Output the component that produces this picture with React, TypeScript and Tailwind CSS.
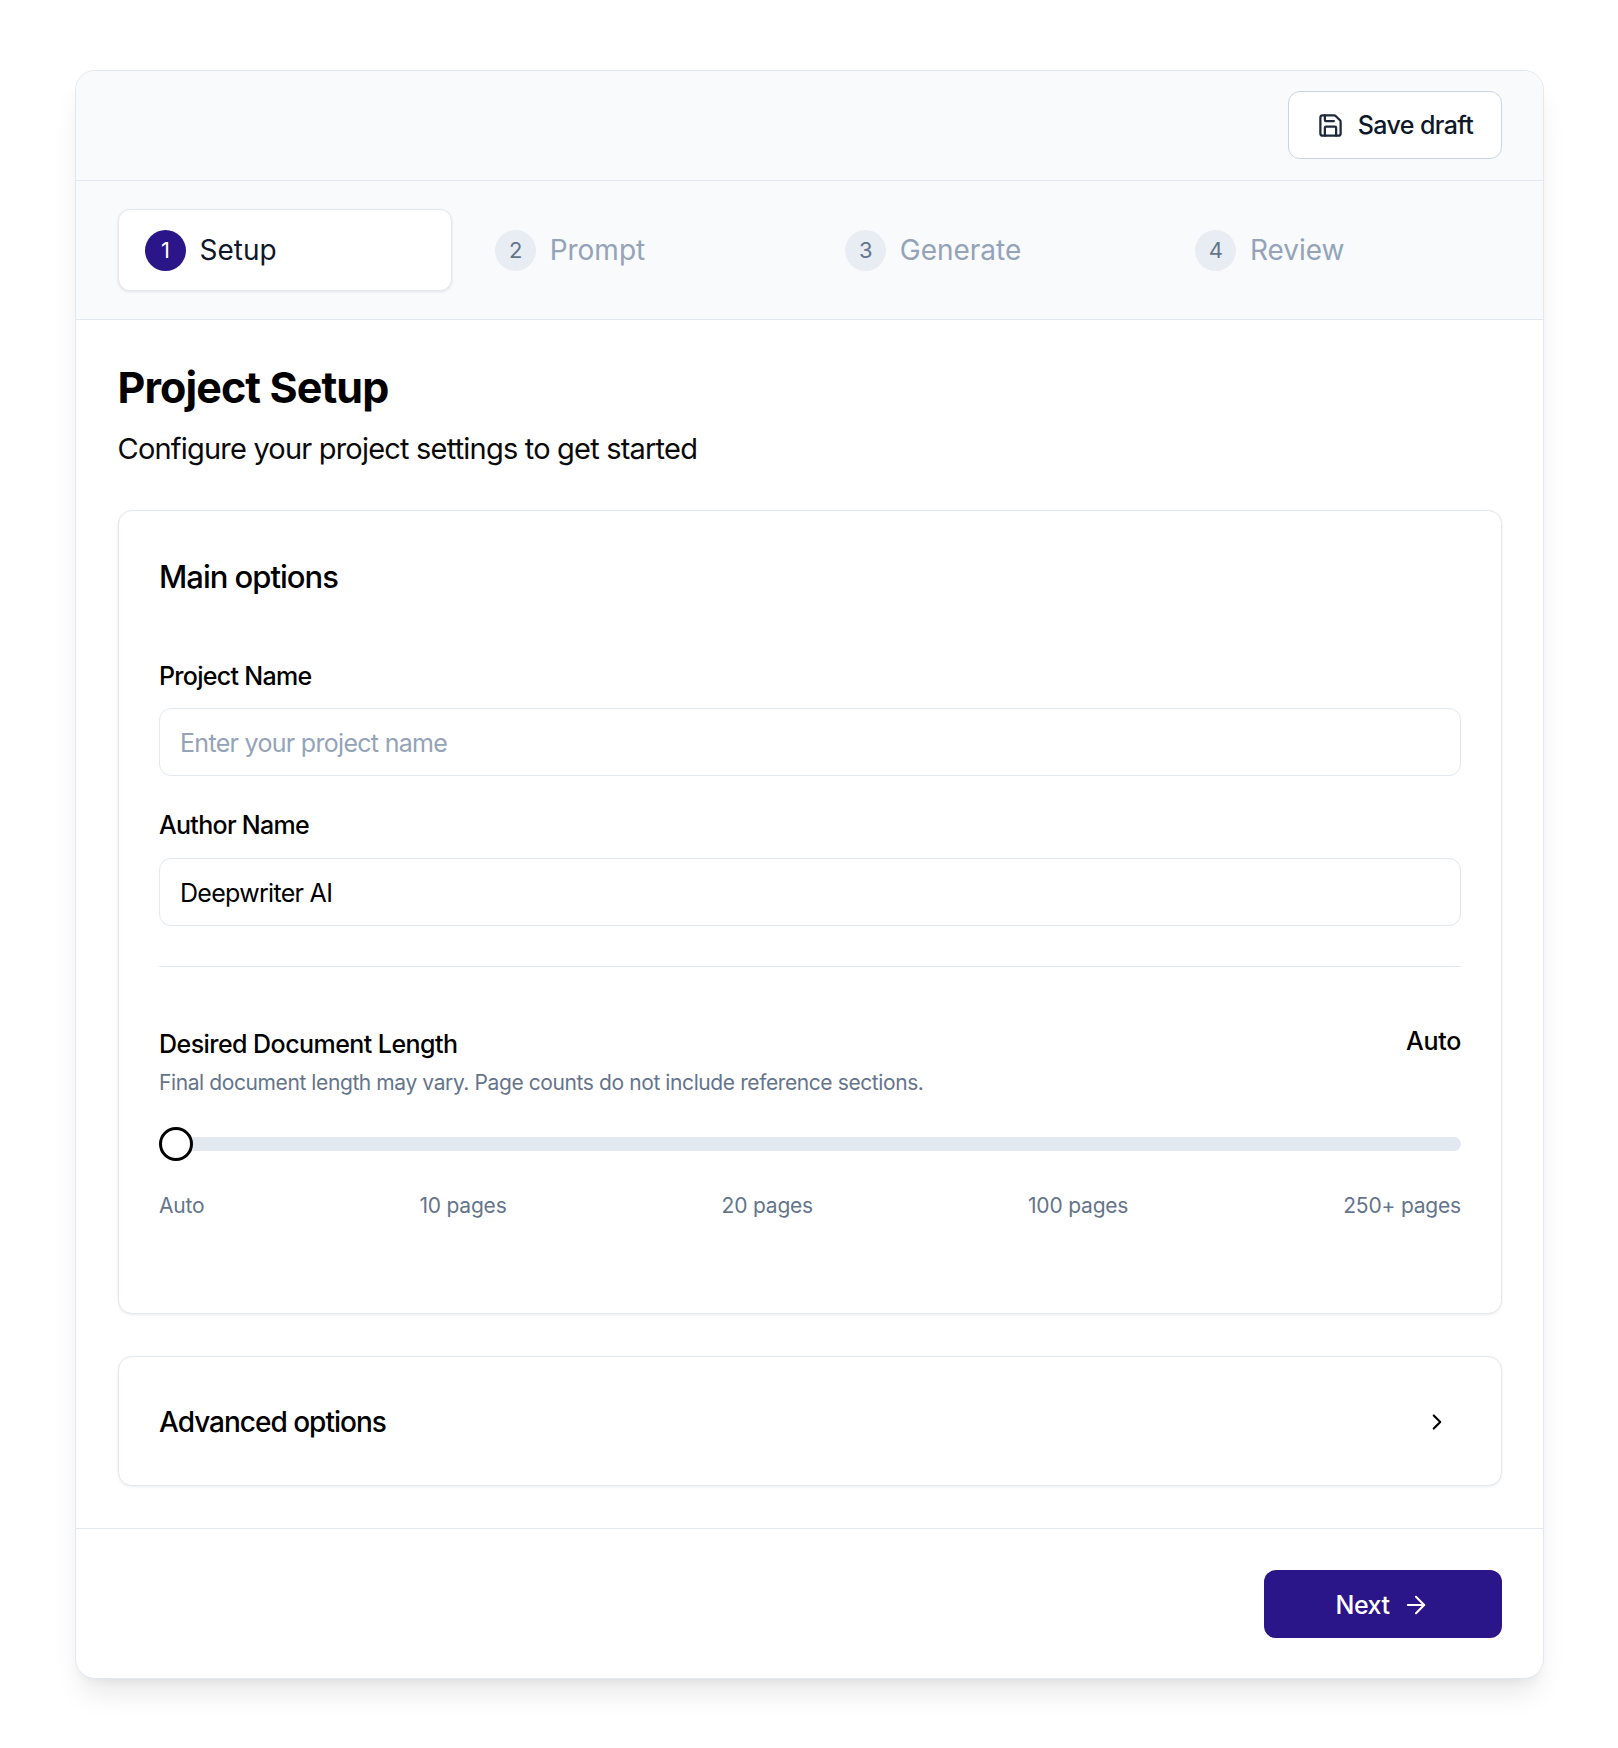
import { ArrowRight, ChevronRight, Save } from "lucide-react";

const steps = [
  { n: 1, label: "Setup", active: true },
  { n: 2, label: "Prompt", active: false },
  { n: 3, label: "Generate", active: false },
  { n: 4, label: "Review", active: false },
];

const marks = ["Auto", "10 pages", "20 pages", "100 pages", "250+ pages"];

function Step({ n, label, active }: { n: number; label: string; active: boolean }) {
  return (
    <div
      className={`flex h-[82px] items-center gap-[13.5px] rounded-[12px] border pl-[26.5px] ${
        active ? "border-[#e2e8f0] bg-white shadow-[0_1px_3px_rgba(15,23,42,0.1)]" : "border-transparent"
      }`}
    >
      <span
        className={`flex h-[41px] w-[41px] items-center justify-center rounded-full text-[22px] ${
          active ? "bg-[#2b1689] text-white" : "bg-[#e8edf4] text-[#64748b]"
        }`}
      >
        {n}
      </span>
      <span className={`text-[28px] leading-[40px] ${active ? "text-[#0f172a]" : "text-[#94a3b8]"}`}>{label}</span>
    </div>
  );
}

export default function App() {
  return (
    <div className="min-h-[1748px] bg-white pl-[75px] pt-[70px] font-[Inter,sans-serif]">
      <div className="w-[1469px] rounded-[20px] border border-[#e2e8f0] bg-white shadow-[0_20px_30px_-8px_rgba(15,23,42,0.1),0_8px_12px_-6px_rgba(15,23,42,0.06)]">
        <header className="flex justify-end rounded-t-[20px] border-b border-[#e2e8f0] bg-[#f8fafc] pb-[21px] pr-[41px] pt-[20px]">
          <button className="flex h-[68px] w-[214px] items-center justify-center gap-[14px] rounded-[12px] border border-[#cbd5e1] bg-white text-[25px] font-medium text-[#0f172a]">
            <Save size={27} strokeWidth={2} className="text-[#1e293b]" />
            <span className="mt-[2px] tracking-[-0.6px]">Save draft</span>
          </button>
        </header>

        <nav className="grid grid-cols-4 gap-[16px] border-b border-[#e2e8f0] bg-[#f8fafc] pb-[28px] pl-[41.5px] pr-[41px] pt-[28px]">
          {steps.map((s) => (
            <Step key={s.n} n={s.n} label={s.label} active={s.active} />
          ))}
        </nav>

        <main className="pb-[42px] pl-[41.5px] pr-[41px] pt-[41px]">
          <h1 className="text-[43px] font-bold leading-[52px] tracking-[-0.9px] text-black">Project Setup</h1>
          <p className="mt-[16px] text-[29px] leading-[40px] tracking-[-0.8px] text-[#0a0a0a]">
            Configure your project settings to get started
          </p>

          <section className="mt-[41px] rounded-[14px] border border-[#e2e8f0] bg-white pb-[92px] pl-[40.5px] pr-[40px] pt-[45px] shadow-[0_1px_3px_rgba(15,23,42,0.08)]">
            <h2 className="text-[31px] font-medium leading-[42px] tracking-[-1px] text-black">Main options</h2>

            <label className="mt-[62px] block text-[25px] font-medium leading-[32px] tracking-[-0.7px] text-black">
              Project Name
            </label>
            <input
              placeholder="Enter your project name"
              className="mt-[16px] block h-[68px] w-full rounded-[12px] border border-[#e2e8f0] bg-white px-[20px] pt-[2px] text-[25px] tracking-[-0.7px] text-black outline-none placeholder:text-[#94a3b8]"
            />

            <label className="mt-[33px] block text-[25px] font-medium leading-[32px] tracking-[-0.7px] text-black">
              Author Name
            </label>
            <input
              defaultValue="Deepwriter AI"
              className="mt-[17px] block h-[68px] w-full rounded-[12px] border border-[#e2e8f0] bg-white px-[20px] pt-[2px] text-[25px] tracking-[-0.7px] text-black outline-none"
            />

            <div className="mt-[40px] border-t border-[#e2e8f0]" />

            <div className="mt-[61px] flex items-start justify-between">
              <div>
                <h3 className="text-[25px] font-medium leading-[32px] tracking-[-0.55px] text-black">
                  Desired Document Length
                </h3>
                <p className="mt-[8px] text-[21px] leading-[30px] tracking-[-0.4px] text-[#64748b]">
                  Final document length may vary. Page counts do not include reference sections.
                </p>
              </div>
              <span className="mt-[-3px] text-[25px] font-medium leading-[32px] tracking-[-0.3px] text-black">Auto</span>
            </div>

            <div className="relative mt-[29px] flex h-[34px] items-center">
              <div className="h-[14px] w-full rounded-full bg-[#e2e8f0]" />
              <div className="absolute left-0 top-0 h-[34px] w-[34px] rounded-full border-[3.5px] border-black bg-white" />
            </div>

            <div className="mt-[30px] flex justify-between text-[21px] leading-[30px] tracking-[-0.2px] text-[#64748b]">
              {marks.map((m) => (
                <span key={m}>{m}</span>
              ))}
            </div>
          </section>

          <section className="mt-[42px] flex h-[130px] items-center justify-between rounded-[14px] border border-[#e2e8f0] bg-white pl-[40.5px] pr-[51px] pt-[2px] shadow-[0_1px_3px_rgba(15,23,42,0.08)]">
            <h2 className="text-[28px] font-medium leading-[40px] tracking-[-1px] text-black">Advanced options</h2>
            <ChevronRight size={26} strokeWidth={2} className="text-black" />
          </section>
        </main>

        <footer className="flex justify-end border-t border-[#e2e8f0] pb-[40px] pr-[41px] pt-[41px]">
          <button className="flex h-[68px] w-[238px] items-center justify-center gap-[13px] rounded-[12px] bg-[#2b1689] text-[25px] font-medium text-white">
            <span className="mt-[3px] tracking-[-0.5px]">Next</span>
            <ArrowRight size={28} strokeWidth={1.75} className="mt-[1px]" />
          </button>
        </footer>
      </div>
    </div>
  );
}
